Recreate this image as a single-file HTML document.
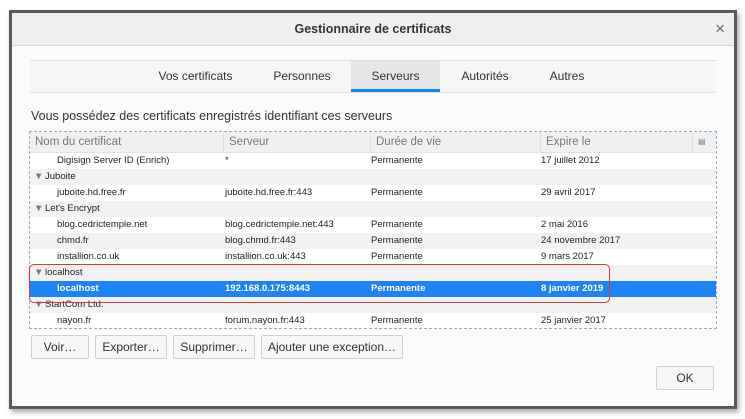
<!DOCTYPE html>
<html><head><meta charset="utf-8"><style>
body{margin:0;width:745px;height:419px;background:#fff;font-family:"Liberation Sans",sans-serif;position:relative;overflow:hidden;color:#222}
.win{position:absolute;left:9px;top:10px;width:722px;height:393px;border:3px solid #5a5a5a;background:#fbfbfb;box-shadow:2px 3px 5px rgba(0,0,0,.35)}
.title{position:absolute;left:0;top:0;width:722px;height:32px;background:#efefef;border-bottom:1px solid #d4d4d4;text-align:center;line-height:32px;font-size:12.5px;font-weight:bold;color:#333}
.x{position:absolute;right:9px;top:0;font-size:17px;color:#666;font-weight:normal}
.tabs{position:absolute;left:18px;top:47px;width:686px;height:31px;background:#f6f6f6;border-top:1px solid #e0e0e0;border-bottom:1px solid #e0e0e0}
.tab{position:absolute;top:0;height:31px;line-height:30px;font-size:12px;color:#333;text-align:center}
.sel{background:#e7e7e7;border-bottom:3px solid #0a84ff;height:28px}
.h{position:absolute;left:19px;top:96px;font-size:12.5px;color:#333}
.tbl{position:absolute;left:17px;top:118px;width:686px;height:196px;border:1px dashed #8ab0d8;background:#fff;overflow:hidden}
.hd{position:absolute;left:0;top:0;width:686px;height:20px;background:#f0f0f0;border-bottom:1px solid #e2e2e2;font-size:11.5px;color:#777;line-height:20px}
.hd span{position:absolute;top:0;padding-left:5px;border-left:1px solid #e0e0e0;height:20px}
.r{position:absolute;left:0;width:686px;height:16px;font-size:9.5px;line-height:16px;color:#222}
.r span{position:absolute;top:0}
.g{background:#f2f2f2}
.s{background:#1e83f5;color:#fff;font-weight:bold}
.btn{position:absolute;top:322px;height:22px;border:1px solid #d0d0d0;background:#f7f7f7;font-size:12px;line-height:22px;text-align:center;color:#333;border-radius:2px}
.red{position:absolute;left:29px;top:264px;width:579px;height:37px;border:1.5px solid #d9373e;border-radius:5px}
</style></head><body>
<div class="win">
<div class="title">Gestionnaire de certificats<span class="x">×</span></div>
<div class="tabs">
<div class="tab" style="left:118px;width:95px">Vos certificats</div>
<div class="tab" style="left:232px;width:80px">Personnes</div>
<div class="tab sel" style="left:321px;width:89px">Serveurs</div>
<div class="tab" style="left:425px;width:60px">Autorités</div>
<div class="tab" style="left:512px;width:50px">Autres</div>
</div>
<div class="h">Vous possédez des certificats enregistrés identifiant ces serveurs</div>
<div class="tbl">
<div class="hd"><span style="left:0;border:0">Nom du certificat</span><span style="left:193px">Serveur</span><span style="left:340px">Durée de vie</span><span style="left:510px">Expire le</span><span style="left:662px;font-size:8px">▤</span></div>
<div class="r" style="top:21px"><span style="left:27px">Digisign Server ID (Enrich)</span><span style="left:195px">*</span><span style="left:341px">Permanente</span><span style="left:511px">17 juillet 2012</span></div>
<div class="r g" style="top:37px"><span style="left:4px;color:#777">▼</span><span style="left:15px">Juboite</span></div>
<div class="r" style="top:53px"><span style="left:27px">juboite.hd.free.fr</span><span style="left:195px">juboite.hd.free.fr:443</span><span style="left:341px">Permanente</span><span style="left:511px">29 avril 2017</span></div>
<div class="r g" style="top:69px"><span style="left:4px;color:#777">▼</span><span style="left:15px">Let's Encrypt</span></div>
<div class="r" style="top:85px"><span style="left:27px">blog.cedrictemple.net</span><span style="left:195px">blog.cedrictemple.net:443</span><span style="left:341px">Permanente</span><span style="left:511px">2 mai 2016</span></div>
<div class="r g" style="top:101px"><span style="left:27px">chmd.fr</span><span style="left:195px">blog.chmd.fr:443</span><span style="left:341px">Permanente</span><span style="left:511px">24 novembre 2017</span></div>
<div class="r" style="top:117px"><span style="left:27px">installion.co.uk</span><span style="left:195px">installion.co.uk:443</span><span style="left:341px">Permanente</span><span style="left:511px">9 mars 2017</span></div>
<div class="r g" style="top:133px"><span style="left:4px;color:#777">▼</span><span style="left:15px">localhost</span></div>
<div class="r s" style="top:149px"><span style="left:27px">localhost</span><span style="left:195px">192.168.0.175:8443</span><span style="left:341px">Permanente</span><span style="left:511px">8 janvier 2019</span></div>
<div class="r g" style="top:165px"><span style="left:4px;color:#777">▼</span><span style="left:15px">StartCom Ltd.</span></div>
<div class="r" style="top:181px"><span style="left:27px">nayon.fr</span><span style="left:195px">forum.nayon.fr:443</span><span style="left:341px">Permanente</span><span style="left:511px">25 janvier 2017</span></div>
</div>
<div class="btn" style="left:19px;width:56px">Voir…</div>
<div class="btn" style="left:83px;width:70px">Exporter…</div>
<div class="btn" style="left:161px;width:80px">Supprimer…</div>
<div class="btn" style="left:249px;width:140px">Ajouter une exception…</div>
<div class="btn" style="left:644px;top:353px;width:56px">OK</div>
</div>
<div class="red"></div>
</body></html>
